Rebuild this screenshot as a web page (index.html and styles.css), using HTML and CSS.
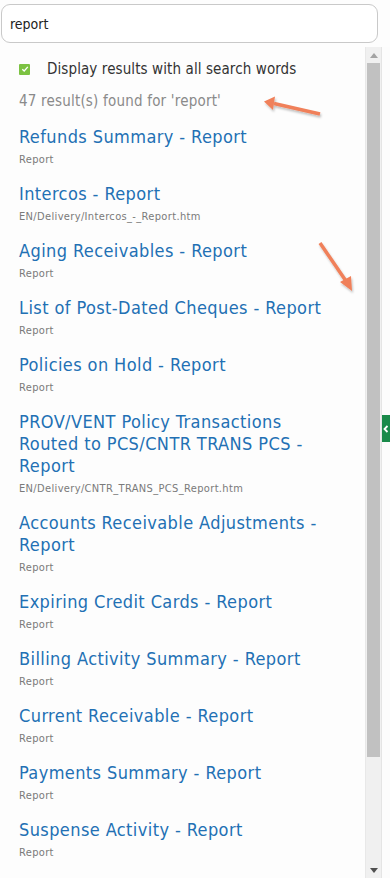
FILE: index.html
```html
<!DOCTYPE html>
<html lang="en">
<head>
<meta charset="utf-8">
<title>Search</title>
<link rel="stylesheet" href="styles.css">
</head>
<body>
<div class="search">
  <input class="search-input" type="text" value="report">
</div>
<div class="panel">
  <div class="results">
    <label class="all-words">
      <span class="check"><svg width="8" height="8" viewBox="0 0 8 8"><path d="M1.3 4.2 L3.2 6 L6.8 1.9" fill="none" stroke="#fff" stroke-width="1.3"/></svg></span>
      <span>Display results with all search words</span>
    </label>
    <div class="count">47 result(s) found for 'report'</div>
    <ul class="list">
      <li class="item"><a class="title">Refunds Summary - Report</a><div class="sub">Report</div></li>
      <li class="item"><a class="title">Intercos - Report</a><div class="sub">EN/Delivery/Intercos_-_Report.htm</div></li>
      <li class="item"><a class="title">Aging Receivables - Report</a><div class="sub">Report</div></li>
      <li class="item"><a class="title">List of Post-Dated Cheques - Report</a><div class="sub">Report</div></li>
      <li class="item"><a class="title">Policies on Hold - Report</a><div class="sub">Report</div></li>
      <li class="item"><a class="title">PROV/VENT Policy Transactions<br>Routed to PCS/CNTR TRANS PCS -<br>Report</a><div class="sub">EN/Delivery/CNTR_TRANS_PCS_Report.htm</div></li>
      <li class="item"><a class="title">Accounts Receivable Adjustments -<br>Report</a><div class="sub">Report</div></li>
      <li class="item"><a class="title">Expiring Credit Cards - Report</a><div class="sub">Report</div></li>
      <li class="item"><a class="title">Billing Activity Summary - Report</a><div class="sub">Report</div></li>
      <li class="item"><a class="title">Current Receivable - Report</a><div class="sub">Report</div></li>
      <li class="item"><a class="title">Payments Summary - Report</a><div class="sub">Report</div></li>
      <li class="item"><a class="title">Suspense Activity - Report</a><div class="sub">Report</div></li>
    </ul>
  </div>
  <div class="scrollbar">
    <div class="sb-btn"><svg width="8" height="5" viewBox="0 0 8 5"><path d="M0 5 L4 0 L8 5Z" fill="#a3a3a3"/></svg></div>
    <div class="sb-thumb"></div>
    <div class="sb-rest"></div>
    <div class="sb-btn"><svg width="8" height="5" viewBox="0 0 8 5"><path d="M0 0 L8 0 L4 5Z" fill="#505050"/></svg></div>
  </div>
  <div class="edge">
    <div class="tab"><svg width="6" height="8" viewBox="0 0 6 8"><path d="M4.5 1 L1.5 4 L4.5 7" fill="none" stroke="#fff" stroke-width="1.8"/></svg></div>
  </div>
  <svg class="annot" width="390" height="878" viewBox="0 0 390 878">
    <defs>
      <filter id="sh" x="-20%" y="-20%" width="140%" height="140%">
        <feDropShadow dx="1" dy="2" stdDeviation="1.2" flood-color="#000" flood-opacity="0.25"/>
      </filter>
    </defs>
    <g filter="url(#sh)" fill="#f0805a" stroke="#f0805a">
      <line x1="320" y1="114" x2="274" y2="103.5" stroke-width="3.5"/>
      <path d="M264 101.5 L275 96.5 L273 110Z" stroke="none"/>
      <line x1="320" y1="243" x2="346" y2="281" stroke-width="3.5"/>
      <path d="M352 291 L340 282 L351 276Z" stroke="none"/>
    </g>
  </svg>
</div>
</body>
</html>
```
FILE: styles.css
```css
* { box-sizing: border-box; }
html, body { margin: 0; padding: 0; background: #fdfdfd; }
body {
  width: 390px;
  height: 878px;
  overflow: hidden;
  font-family: "DejaVu Sans", "Liberation Sans", sans-serif;
  font-stretch: condensed;
  color: #333;
}
.search { padding: 4px 12px 0 1px; }
.search-input {
  display: block;
  width: 377px;
  height: 39px;
  border: 1px solid #c9c9c9;
  border-radius: 9px;
  background: #fff;
  padding: 0 8px;
  font-family: inherit;
  font-stretch: condensed;
  font-size: 14px;
  color: #222;
  outline: none;
}
.panel {
  position: relative;
  display: flex;
  height: 831px;
  margin-top: 4px;
}
.results {
  flex: 1;
  padding: 12px 0 0 19px;
  overflow: hidden;
}
.all-words {
  display: flex;
  align-items: center;
  height: 20px;
  font-size: 15px;
  letter-spacing: 0.1px;
  color: #333;
}
.check {
  display: flex;
  align-items: center;
  justify-content: center;
  width: 11px;
  height: 11px;
  background: #7cc242;
  border-radius: 1px;
  margin-right: 17px;
}
.count {
  margin-top: 12px;
  height: 20px;
  line-height: 20px;
  font-size: 15px;
  letter-spacing: 0.2px;
  color: #8a8a8a;
}
.list { list-style: none; margin: 15px 0 0; padding: 0; }
.item { margin-bottom: 15px; }
.title {
  display: block;
  font-size: 18px;
  line-height: 22px;
  letter-spacing: 0.4px;
  color: #2270b4;
  text-decoration: none;
}
.sub {
  margin-top: 4px;
  font-size: 11px;
  line-height: 16px;
  letter-spacing: 0.35px;
  color: #7a7a7a;
}
.scrollbar {
  width: 16px;
  display: flex;
  flex-direction: column;
  background: #f0f0f0;
  border-left: 1px solid #e8e8e8;
  padding: 0 1px;
}
.sb-btn {
  height: 16px;
  display: flex;
  align-items: center;
  justify-content: center;
}
.sb-thumb { height: 694px; background: #c1c1c1; }
.sb-rest { flex: 1; }
.edge {
  width: 9px;
  border-left: 1px solid #e4e4e4;
  background: #fcfcfc;
  padding-top: 368px;
}
.tab {
  width: 8px;
  height: 27px;
  background: #1a8a4a;
  display: flex;
  align-items: center;
  justify-content: center;
}
.annot {
  position: absolute;
  left: 0;
  top: -47px;
  pointer-events: none;
}
```
